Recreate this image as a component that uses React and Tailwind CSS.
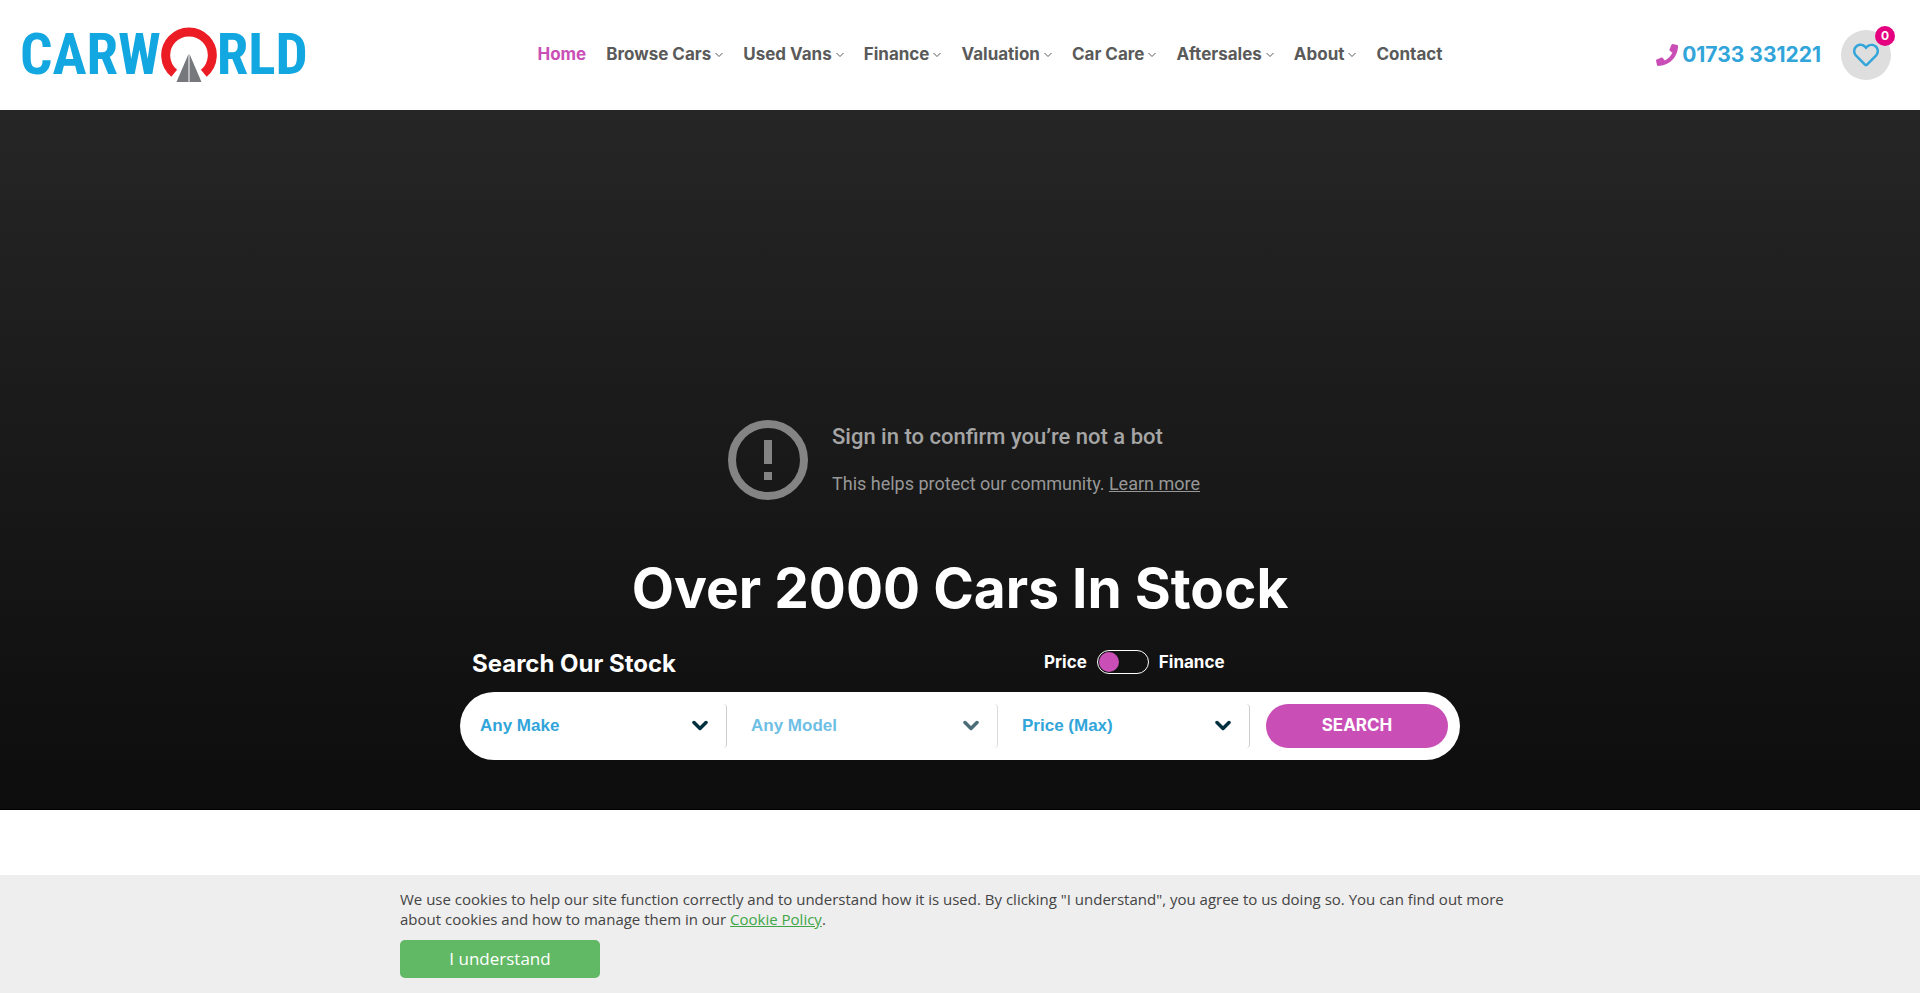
import { useState } from "react";
import { FaPhone, FaRegHeart } from "react-icons/fa";

const navItems = [
  { label: "Home", active: true },
  { label: "Browse Cars", menu: true },
  { label: "Used Vans", menu: true },
  { label: "Finance", menu: true },
  { label: "Valuation", menu: true },
  { label: "Car Care", menu: true },
  { label: "Aftersales", menu: true },
  { label: "About", menu: true },
  { label: "Contact" },
];

function Logo() {
  return (
    <a href="#home" aria-label="Carworld" className="flex items-center font-['Roboto_Condensed','Liberation_Sans_Narrow',sans-serif] text-[57px] leading-[56px] font-bold text-[#12a7e0]">
      <span>CARW</span>
      <svg width="56" height="56" viewBox="0 0 56 56" aria-hidden="true">
        <path d="M13.2 46.200A23.300 23.300 0 1 1 42.800 46.200" fill="none" stroke="#ec1c24" strokeWidth="9" />
        <path d="M27.500 27V55H15.500Z" fill="#77787b" />
        <path d="M28.500 27V55H40.500Z" fill="#77787b" />
      </svg>
      <span>RLD</span>
    </a>
  );
}

function SmallChevron() {
  return (
    <svg width="8" height="6" viewBox="0 0 8 6" fill="none" stroke="currentColor" aria-hidden="true">
      <path d="M.5 1L4 4.500L7.500 1" />
    </svg>
  );
}

function Header() {
  return (
    <header className="flex h-[110px] items-center justify-between bg-white pr-[29px] pl-5">
      <Logo />
      <nav className="flex items-center gap-5 pl-4 text-[17px] font-bold text-[#5a5a5a]">
        {navItems.map((item) => (
          <a key={item.label} href="#" className={item.active ? "text-[#c94fb7]" : "flex items-center gap-1"}>
            {item.label}
            {item.menu && <SmallChevron />}
          </a>
        ))}
      </nav>
      <div className="flex items-center gap-5">
        <a href="tel:01733331221" className="flex items-center gap-1 text-[21px] font-bold text-[#31a5da]">
          <FaPhone className="text-[22px] text-[#c94fb7]" />
          01733 331221
        </a>
        <a href="#saved" aria-label="Saved cars" className="relative flex size-[50px] items-center justify-center rounded-full bg-[#dedede] text-[26px] text-[#31a5da]">
          <FaRegHeart />
          <span className="absolute -top-1 -right-1 flex size-5 items-center justify-center rounded-full bg-[#e4007f] text-xs font-bold text-white">0</span>
        </a>
      </div>
    </header>
  );
}

function VideoNotice() {
  return (
    <div className="col-start-1 row-start-1 flex items-center gap-6 self-center justify-self-center pl-2 font-[Roboto,sans-serif]">
      <svg width="80" height="80" viewBox="0 0 80 80" fill="#848484" aria-hidden="true">
        <circle cx="40" cy="40" r="36" fill="none" stroke="#848484" strokeWidth="8" />
        <path d="M36 20h8v24h-8zM36 52h8v8h-8z" />
      </svg>
      <div className="pt-0.5">
        <p className="text-[22px] leading-[26px] font-medium text-[#a5a5a5]">Sign in to confirm you’re not a bot</p>
        <p className="mt-5 text-lg leading-7 text-[#979797]">
          This helps protect our community. <a href="#" className="underline">Learn more</a>
        </p>
      </div>
    </div>
  );
}

function SearchSelect({ label, disabled, className }) {
  return (
    <div className={`grid items-center ${disabled ? "opacity-70" : ""} ${className}`}>
      <select aria-label={label} disabled={disabled} className="col-start-1 row-start-1 h-11 w-full appearance-none rounded border-r border-[#ccc] bg-white font-['Liberation_Sans',sans-serif] text-[17px] font-bold text-[#31a5da] opacity-100">
        <option>{label}</option>
      </select>
      <svg width="16" height="12" viewBox="0 0 16 12" fill="none" stroke="#00303f" strokeWidth="3.500" strokeLinecap="round" strokeLinejoin="round" aria-hidden="true" className="pointer-events-none col-start-1 row-start-1 mr-[19px] justify-self-end">
        <path d="M2 2.500L8 8.500L14 2.500" />
      </svg>
    </div>
  );
}

function SearchForm() {
  const [finance, setFinance] = useState(false);

  return (
    <form className="w-full max-w-[1000px]" onSubmit={(e) => e.preventDefault()}>
      <div className="flex h-9 items-center pl-3 text-white">
        <h2 className="w-[572px] pt-1 text-2xl leading-7 font-bold">Search Our Stock</h2>
        <label className="flex items-center gap-[10px] text-[17px] leading-6 font-bold">
          Price
          <input type="checkbox" role="switch" aria-label="Finance" checked={finance} onChange={() => setFinance(!finance)} className="peer sr-only" />
          <span className="flex h-6 w-[52px] items-center rounded-full border border-white p-px peer-checked:justify-end">
            <span className="size-5 rounded-full bg-[#c94fb7]" />
          </span>
          Finance
        </label>
      </div>
      <div className="mt-3 flex h-[68px] items-center rounded-full bg-white pr-3 pl-5">
        <SearchSelect label="Any Make" className="flex-[247]" />
        <SearchSelect label="Any Model" disabled className="ml-6 flex-[247]" />
        <SearchSelect label="Price (Max)" className="ml-6 flex-[228]" />
        <button type="submit" className="ml-4 h-11 w-[182px] rounded-full bg-[#c94fb7] text-[17px] font-bold text-white">SEARCH</button>
      </div>
    </form>
  );
}

function CookieBar() {
  return (
    <aside className="mt-auto bg-[#eee] px-4 pt-[14px] pb-[15px] font-['Open_Sans',sans-serif]">
      <div className="mx-auto max-w-[1120px]">
        <p className="text-[15px] leading-5 text-[#444]">
          We use cookies to help our site function correctly and to understand how it is used. By clicking "I understand", you agree to us doing so. You can find out more about cookies and how to manage them in our{" "}
          <a href="#cookies" className="text-[#3fa648] underline">Cookie Policy</a>.
        </p>
        <button type="button" className="mt-[11px] h-[38px] w-[200px] rounded-[5px] bg-[#61b965] text-[17px] text-white">I understand</button>
      </div>
    </aside>
  );
}

export default function App() {
  return (
    <div className="flex min-h-screen flex-col bg-white font-[Inter,sans-serif]">
      <Header />
      <main className="grid min-h-[700px] border-b border-black bg-linear-to-b from-[#262626] to-[#0d0d0d]">
        <VideoNotice />
        <div className="col-start-1 row-start-1 flex flex-col items-center self-end px-4 pb-[49px]">
          <h1 className="mb-6 text-center text-[55px] leading-[64px] font-bold text-white">Over 2000 Cars In Stock</h1>
          <SearchForm />
        </div>
      </main>
      <CookieBar />
    </div>
  );
}
